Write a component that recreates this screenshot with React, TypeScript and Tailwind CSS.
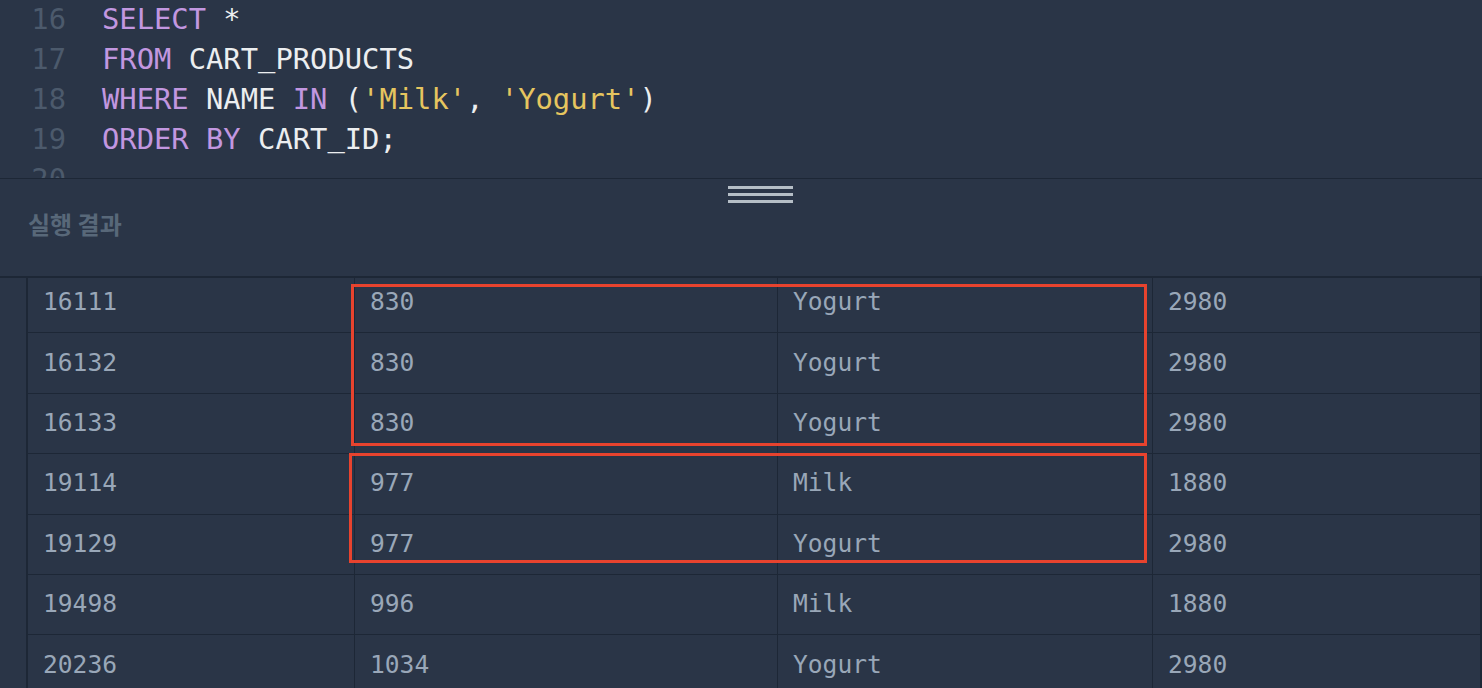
import React from "react";

type Tok = { t: string; c: "kw" | "id" | "str" };

const code: { n: number; toks: Tok[] }[] = [
  { n: 16, toks: [{ t: "SELECT", c: "kw" }, { t: " *", c: "id" }] },
  { n: 17, toks: [{ t: "FROM", c: "kw" }, { t: " CART_PRODUCTS", c: "id" }] },
  {
    n: 18,
    toks: [
      { t: "WHERE", c: "kw" },
      { t: " NAME ", c: "id" },
      { t: "IN", c: "kw" },
      { t: " (", c: "id" },
      { t: "'Milk'", c: "str" },
      { t: ", ", c: "id" },
      { t: "'Yogurt'", c: "str" },
      { t: ")", c: "id" },
    ],
  },
  {
    n: 19,
    toks: [
      { t: "ORDER BY", c: "kw" },
      { t: " CART_ID;", c: "id" },
    ],
  },
  { n: 20, toks: [] },
];

const tokColor = {
  kw: "text-[#c297e0]",
  id: "text-[#eceef0]",
  str: "text-[#e6c55f]",
};

const rows = [
  ["16111", "830", "Yogurt", "2980"],
  ["16132", "830", "Yogurt", "2980"],
  ["16133", "830", "Yogurt", "2980"],
  ["19114", "977", "Milk", "1880"],
  ["19129", "977", "Yogurt", "2980"],
  ["19498", "996", "Milk", "1880"],
  ["20236", "1034", "Yogurt", "2980"],
];

const mono = "font-['DejaVu_Sans_Mono','Liberation_Mono',monospace]";

// underscore sits a little higher in the editor font
const renderTok = (t: string) =>
  t.split(/(_)/).map((part, i) =>
    part === "_" ? (
      <span key={i} className="relative -top-[3px]">
        _
      </span>
    ) : (
      part
    )
  );

export default function App() {
  return (
    <div className="relative w-[1482px] h-[688px] overflow-hidden bg-[#2a3547] flex flex-col">
      {/* editor */}
      <div className={`h-[178px] shrink-0 overflow-hidden ${mono} text-[28.8px]`}>
        <div className="-mt-[1px]">
          {code.map((line) => (
            <div key={line.n} className="flex h-[40px] items-center leading-[40px]">
              <span className="w-[66px] text-right text-[#4c5a6c]">{line.n}</span>
              <span className="pl-[36px] whitespace-pre">
                {line.toks.map((tk, i) => (
                  <span key={i} className={tokColor[tk.c]}>
                    {renderTok(tk.t)}
                  </span>
                ))}
              </span>
            </div>
          ))}
        </div>
      </div>

      {/* splitter + label */}
      <div className="h-[98px] shrink-0 border-t border-[#1d2736] flex flex-col">
        <div className="flex justify-center pt-[7px]">
          <div className="flex flex-col gap-[4px] w-[65px] ml-[39px]">
            <div className="h-[3px] bg-[#b5bec6]" />
            <div className="h-[3px] bg-[#b5bec6]" />
            <div className="h-[3px] bg-[#b5bec6]" />
          </div>
        </div>
        <div className="pl-[28px] pt-[4px] text-[24px] font-bold text-[#586879] font-['Noto_Sans_CJK_KR','Noto_Sans',sans-serif] leading-[34px]">
          실행 결과
        </div>
      </div>

      {/* results */}
      <div className="flex-1 overflow-hidden border-t-2 border-[#1d2736] flex">
        <div className="w-[28px] shrink-0 border-r-2 border-[#1d2736]" />
        <div className="flex-1 border-r-2 border-[#1d2736] overflow-hidden">
          <div className="-mt-[5px]">
            {rows.map((r, i) => (
              <div
                key={i}
                className={`grid grid-cols-[326px_423px_375px_1fr] h-[60.4px] border-b border-[#1d2736] ${mono} text-[24.6px] text-[#99a7b8]`}
              >
                {r.map((c, j) => (
                  <div
                    key={j}
                    className={`flex items-center pl-[15px] ${j > 0 ? "border-l border-[#1d2736]" : ""}`}
                  >
                    {c}
                  </div>
                ))}
              </div>
            ))}
          </div>
        </div>
      </div>

      {/* highlight boxes */}
      <div className="absolute left-[351px] top-[284px] w-[796px] h-[162px] border-[3px] border-[#e8432e]" />
      <div className="absolute left-[349px] top-[453px] w-[798px] h-[110px] border-[3px] border-[#e8432e]" />
    </div>
  );
}
